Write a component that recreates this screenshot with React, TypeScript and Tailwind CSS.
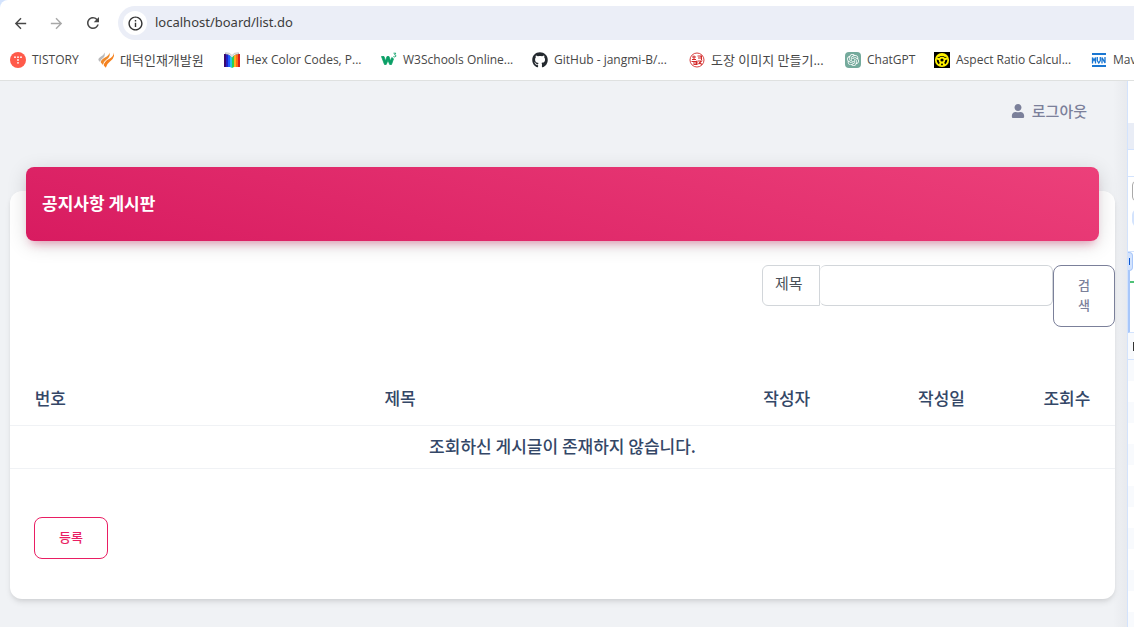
import type { ReactNode } from 'react'
import { MdArrowBack, MdArrowForward, MdInfoOutline, MdRefresh } from 'react-icons/md'
import { FaGithub, FaUser } from 'react-icons/fa'
import { SiOpenai } from 'react-icons/si'

function TistoryIcon() {
  return (
    <svg width="16" height="16" viewBox="0 0 16 16">
      <circle cx="8" cy="8" r="8" fill="#ff5a4a" />
      <g fill="#fff">
        <circle cx="5" cy="5.2" r="0.9" />
        <circle cx="8" cy="5.2" r="0.9" />
        <circle cx="11" cy="5.2" r="0.9" />
        <circle cx="8" cy="8" r="0.9" />
        <circle cx="8" cy="10.8" r="0.9" />
      </g>
    </svg>
  )
}

function DaedeokIcon() {
  return (
    <svg width="16" height="16" viewBox="0 0 16 16" fill="none">
      <path d="M6.5 0.5 Q6 3 3 4.5 Q0 6 0.3 8 L2 10 Q2.5 7.5 5 6 Q7.5 4 6.5 0.5 Z" fill="#b9b9bb" />
      <path d="M11.5 0.5 Q11 3.5 7 5.5 Q2.5 8 2.8 10.5 L5 13 Q5.5 9.5 8.5 7.5 Q12.5 5 11.5 0.5 Z" fill="#ee8a2c" />
      <path d="M16 0.5 Q15.5 4.5 11 7 Q6 9.5 5.8 13.5 L7.8 15.8 Q8.5 12 12 9.5 Q17 6 16 0.5 Z" fill="#f58220" />
    </svg>
  )
}

function HexColorIcon() {
  return (
    <svg width="16" height="16" viewBox="0 0 16 16">
      <path d="M0 2 H2 V15 H0 Z" fill="#3b0a70" />
      <path d="M2 2 H4 V15 H2 Z" fill="#2222c8" />
      <path d="M4 2 L6 3 V15 H4 Z" fill="#1d5cff" />
      <path d="M6 3 L8 5 V16 L6 15 Z" fill="#25c5e8" />
      <path d="M8 5 L10 3 V15 L8 16 Z" fill="#2fd04b" />
      <path d="M10 3 L12 2 V15 H10 Z" fill="#ffb01f" />
      <path d="M12 2 H14 V15 H12 Z" fill="#ff6a14" />
      <path d="M14 2 H16 V15 H14 Z" fill="#d81e1e" />
      <path d="M1.5 0.8 Q6 0.5 8 3.5 Q10 0.5 14.5 0.8 L14.5 2 Q10 2 8 5.5 Q6 2 1.5 2 Z" stroke="#888" strokeWidth="0.5" fill="#fff" />
    </svg>
  )
}

function W3Icon() {
  return (
    <svg width="16" height="16" viewBox="0 0 16 16" fill="none" stroke="#0a9f66">
      <path d="M0.5 4.5 H3 L4.5 9 L6 4.5 H8 L9.5 9 L10.8 5.5 L12.5 6.8 L10.5 12.5 H8.7 L7 8.2 L5.2 12.5 H3.5 Z" fill="#0a9f66" strokeWidth="0.8" />
      <path d="M12.5 1.2 H14.8 L13.6 2.8 Q15.4 3 14.8 4.4 Q14 5.4 12.4 4.6" strokeWidth="0.9" />
    </svg>
  )
}

function StampIcon() {
  return (
    <svg width="16" height="16" viewBox="0 0 16 16" fill="none" stroke="#d32a2a">
      <circle cx="8" cy="8" r="7" strokeWidth="0.9" />
      <path
        d="M3 5 H7 M5 3.5 V7.5 M3 7.5 H7 M8.5 4 H12 V7 M9 6 H11 M12.5 3.5 V8 M2.5 9.5 H7 V12 M4 11 H6 M4.5 12.5 H7.5 M9 9 L12.5 9 L9.5 12 M10 10.5 L13 12.5 M8 8.5 V13"
        strokeWidth="1.1"
      />
    </svg>
  )
}

function ChatGptIcon() {
  return (
    <span className="flex size-4 items-center justify-center rounded-sm bg-[#74aa9c] text-white">
      <SiOpenai size={12} />
    </span>
  )
}

function AspectRatioIcon() {
  return (
    <svg width="16" height="16" viewBox="0 0 16 16">
      <rect width="16" height="16" fill="#000" />
      <circle cx="8" cy="8" r="6.2" fill="none" stroke="#fff200" strokeWidth="1.8" />
      <circle cx="8" cy="8" r="2.4" fill="none" stroke="#fff200" strokeWidth="1.6" />
      <path d="M2.5 6.2 L6 7.5 M13.5 6.2 L10 7.5 M5.5 13.5 L7.2 10 M10.5 13.5 L8.8 10" stroke="#fff200" strokeWidth="2" />
      <path d="M4 4.5 Q8 1.5 12 4.5" fill="none" stroke="#fff200" strokeWidth="2" />
    </svg>
  )
}

function MvnIcon() {
  return (
    <svg width="16" height="16" viewBox="0 0 16 16" fill="none" stroke="#1976d2">
      <path d="M1 2 H15 M1 14 H15" strokeWidth="2" />
      <path d="M1.5 11.5 V5.5 L3 8.5 L4.5 5.5 V11.5 M6.3 5 V8.5 L7.8 11 L9.3 8.5 V5 M11 11.5 V5.5 L14 11 V5" strokeWidth="1.3" />
    </svg>
  )
}

type BookmarkItem = { label: string; icon: ReactNode; size: string }

const bookmarks: BookmarkItem[] = [
  { label: 'TISTORY', icon: <TistoryIcon />, size: 'w-[88px] text-xs' },
  { label: '대덕인재개발원', icon: <DaedeokIcon />, size: 'w-[126px] text-[13px]' },
  { label: 'Hex Color Codes, P...', icon: <HexColorIcon />, size: 'w-[157px] text-xs' },
  { label: 'W3Schools Online...', icon: <W3Icon />, size: 'w-[151px] text-xs' },
  { label: 'GitHub - jangmi-B/...', icon: <FaGithub size={16} color="#24292f" />, size: 'w-[157px] text-xs' },
  { label: '도장 이미지 만들기...', icon: <StampIcon />, size: 'w-[156px] text-[13px]' },
  { label: 'ChatGPT', icon: <ChatGptIcon />, size: 'w-[89px] text-xs' },
  { label: 'Aspect Ratio Calcul...', icon: <AspectRatioIcon />, size: 'w-[157px] text-xs' },
  { label: 'Maven', icon: <MvnIcon />, size: 'w-[88px] text-xs' },
]

function BrowserBar() {
  return (
    <header className="bg-[#d3e3fd]">
      <div className="rounded-tl-lg border-b border-[#dfe1e0] bg-white">
        <div className="flex items-center pt-[6px] pl-3">
          <div className="flex w-[106px] items-center gap-[19px] text-[#474747]">
            <button aria-label="Back"><MdArrowBack size={17} /></button>
            <button aria-label="Forward" className="text-[#a8a8a8]"><MdArrowForward size={17} /></button>
            <button aria-label="Reload"><MdRefresh size={18} /></button>
          </div>
          <div className="flex h-[34px] flex-1 items-center gap-2 rounded-l-full bg-[#ebeef7] pl-[5px]">
            <span className="flex size-6 items-center justify-center rounded-full bg-white text-[#333]">
              <MdInfoOutline size={17} />
            </span>
            <input
              aria-label="Address"
              defaultValue="localhost/board/list.do"
              className="flex-1 bg-transparent font-['Noto_Sans','Noto_Sans_CJK_KR',sans-serif] text-[13px] text-[#3c3c3c] outline-none"
            />
          </div>
        </div>
        <nav className="flex h-10 items-center overflow-hidden pl-[10px]">
          {bookmarks.map((b) => (
            <a
              key={b.label}
              href="#"
              className={`flex shrink-0 items-center gap-[6px] font-['Open_Sans','Noto_Sans_CJK_KR',sans-serif] leading-5 whitespace-nowrap text-[#474747] ${b.size}`}
            >
              <span className="shrink-0">{b.icon}</span>
              {b.label}
            </a>
          ))}
        </nav>
      </div>
    </header>
  )
}

function SearchForm() {
  return (
    <form className="flex items-start justify-end" onSubmit={(e) => e.preventDefault()}>
      <select
        aria-label="검색 조건"
        className="h-[41px] w-[58px] appearance-none rounded-l-md border border-[#d2d6da] bg-white pb-1 pl-3 text-[15px] text-[#495057]"
      >
        <option>제목</option>
      </select>
      <input
        aria-label="검색어"
        className="h-[41px] w-[233px] rounded-md border border-l-0 border-[#d2d6da] px-3 text-sm outline-none"
      />
      <button className="w-[62px] rounded-lg border border-[#7b809a] px-6 pt-[9px] pb-[11px] text-[13px] leading-5 font-medium text-[#7b809a]">
        검색
      </button>
    </form>
  )
}

function BoardTable() {
  return (
    <table className="w-full table-fixed text-center text-[17px] leading-6 text-[#344767]">
      <colgroup>
        <col className="w-[7.3%]" />
        <col className="w-[56%]" />
        <col className="w-[14%]" />
        <col className="w-[14%]" />
        <col />
      </colgroup>
      <thead>
        <tr className="border-b border-[#f0f2f5]">
          <th className="pt-[11px] pb-[15px] font-medium">번호</th>
          <th className="pt-[11px] pb-[15px] font-medium">제목</th>
          <th className="pt-[11px] pb-[15px] font-medium">작성자</th>
          <th className="pt-[11px] pb-[15px] font-medium">작성일</th>
          <th className="pt-[11px] pb-[15px] font-medium">조회수</th>
        </tr>
      </thead>
      <tbody>
        <tr className="border-b border-[#f0f2f5]">
          <td colSpan={5} className="pt-2 pb-[10px] font-medium">조회하신 게시글이 존재하지 않습니다.</td>
        </tr>
      </tbody>
    </table>
  )
}

// sliver of the docked inspector panel
function InspectorEdge() {
  return (
    <aside className="flex w-[7px] shrink-0 flex-col overflow-hidden border-l border-[#d3e3fd] bg-white">
      <div className="h-[42px]" />
      <div className="h-[27px] border-b border-[#d3e3fd] bg-[#e9edf6]" />
      <div className="h-[27px] border-b border-[#d3e3fd]" />
      <div className="flex h-[75px] flex-col gap-2 border-b border-[#d3e3fd] pt-1 pl-1">
        <div className="h-5 w-4 rounded-sm border border-[#aaa]" />
        <div className="h-[18px] w-4 rounded-md bg-[#d3e3fd]" />
      </div>
      <div className="flex h-[19px] w-[5px] items-center justify-end rounded-r-sm border border-l-0 border-[#a8c7fa] bg-[#d3e3fd]">
        <div className="mr-[2px] h-[7px] w-px bg-[#0b57d0]" />
      </div>
      <div className="h-[62px] border-b border-l-2 border-b-[#d3e3fd] border-l-[#a8c7fa] pt-[10px]">
        <div className="h-[2px] bg-[#4fc277]" />
      </div>
      <div className="flex h-[27px] items-center justify-end border-b border-[#d3e3fd] bg-[#f8fafd]">
        <div className="h-[9px] w-px bg-[#333]" />
      </div>
      <div className="flex-1 bg-[repeating-linear-gradient(180deg,#f8fafd_0_21px,#fff_21px_42px)]" />
    </aside>
  )
}

export default function App() {
  return (
    <div className="flex min-h-screen flex-col font-['Noto_Sans_CJK_KR',sans-serif]">
      <BrowserBar />
      <div className="flex flex-1">
        <main className="min-w-0 flex-1 bg-[#f0f2f5] bg-[linear-gradient(270deg,#e8eaee,#f0f2f5_14px)] pr-3 pb-7 pl-[10px]">
          <div className="flex justify-end pt-[18px] pr-7">
            <a href="#" className="flex items-center gap-[7px] text-[15px] leading-6 font-medium text-[#7b809a]">
              <FaUser size={14} />
              로그아웃
            </a>
          </div>
          <section className="mt-[68px] rounded-xl bg-white pb-10 shadow-[0_4px_6px_-1px_rgba(0,0,0,0.1),0_2px_4px_-1px_rgba(0,0,0,0.06)]">
            <div className="px-4">
              <h6 className="relative -top-6 rounded-lg bg-[linear-gradient(195deg,#ec407a,#d81b60)] px-4 pt-6 pb-[26px] text-[17px] leading-6 font-bold text-white shadow-[0_4px_20px_0_rgba(0,0,0,0.14),0_7px_10px_-5px_rgba(233,30,99,0.4)]">
                공지사항 게시판
              </h6>
            </div>
            <SearchForm />
            <div className="pt-12">
              <BoardTable />
            </div>
            <div className="px-6 pt-12">
              <button className="rounded-lg border border-[#e91e63] px-6 pt-[9px] pb-[11px] text-[13px] leading-5 font-medium text-[#e91e63]">
                등록
              </button>
            </div>
          </section>
        </main>
        <InspectorEdge />
      </div>
    </div>
  )
}
